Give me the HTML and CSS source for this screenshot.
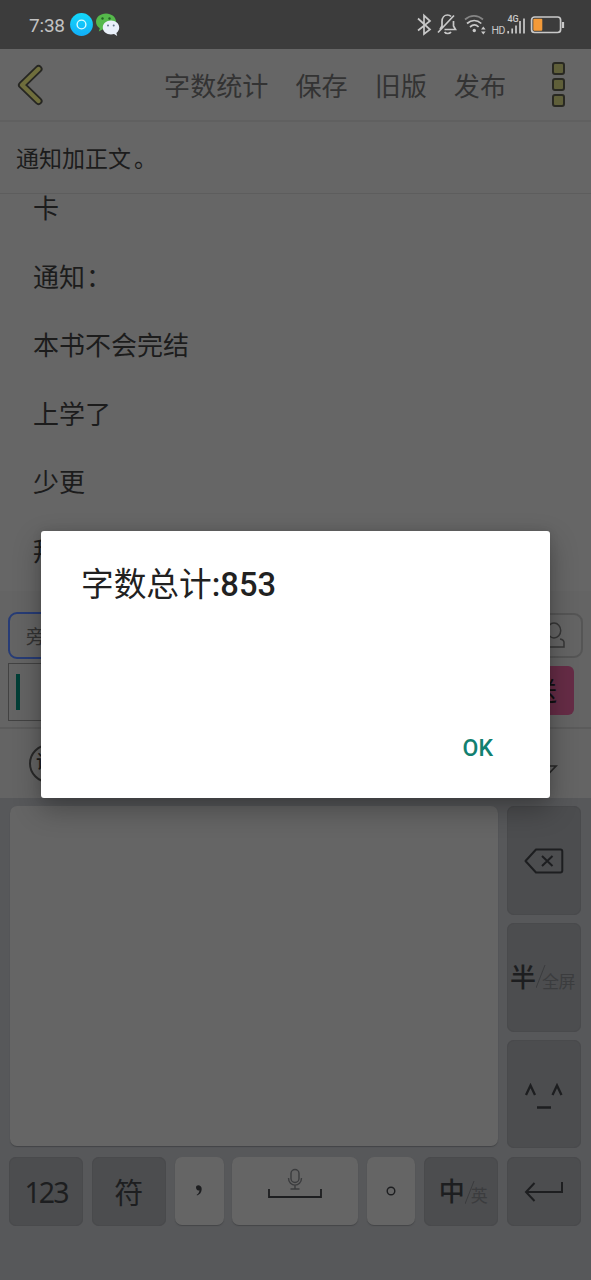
FILE: index.html
```html
<!DOCTYPE html>
<html lang="zh-CN">
<head>
<meta charset="utf-8">
<title>字数统计</title>
<link rel="stylesheet" href="styles.css">
</head>
<body>
<div class="screen">
  <header class="status">
    <span class="clock">7:38</span>
    <svg class="app-icons" width="52" height="26" viewBox="0 0 52 26">
      <defs><linearGradient id="sky" x1="0" y1="0" x2="0" y2="1"><stop offset="0" stop-color="#13d9fb"/><stop offset="1" stop-color="#12aef8"/></linearGradient></defs>
      <circle cx="11.500" cy="12.500" r="11.400" fill="url(#sky)"/>
      <circle cx="11.500" cy="12.500" r="4.400" fill="none" stroke="#d9fbff" stroke-width="1.400"/>
      <path d="M36 1.500c-5.600 0-10 3.600-10 8.200 0 2.700 1.500 5 3.800 6.500l-1 3.200 3.600-1.900c1.100.3 2.400.5 3.600.5 5.600 0 10-3.700 10-8.300s-4.400-8.200-10-8.200z" fill="#55b94b"/>
      <circle cx="32.500" cy="6.500" r="1.200" fill="#246325"/><circle cx="39.500" cy="6.500" r="1.200" fill="#246325"/>
      <path d="M41 8.500c-4.600 0-8.200 3.100-8.200 7s3.600 7 8.200 7c1.100 0 2.100-.2 3-.5l3.200 1.900-.8-2.900c1.700-1.300 2.800-3.200 2.800-5.500 0-3.900-3.600-7-8.200-7z" fill="#e9f0fa"/>
      <circle cx="38" cy="13.500" r="1" fill="#66768a"/><circle cx="43.700" cy="13.500" r="1" fill="#66768a"/>
    </svg>
    <svg class="system-icons" width="150" height="28" viewBox="0 0 150 28" fill="none" stroke="#c9c9c9" stroke-width="1.700">
      <path d="M3 7.500l12 11L9 23V4.500l6 5.500L3 19.500"/>
      <path d="M29.500 18.500h11l-2-3.500V10M25 18.500l2-3.500v-4.500c0-4 2.500-6.500 5.500-6.500 1.500 0 2.700.5 3.500 1.500M29.500 21c1.500 2 5 2 6.500 0M23 21.500L39 4.500"/>
      <path d="M50 8.500c5.500-4.800 12.500-4.800 18 0" stroke="#858585"/><path d="M52 12.500c4.500-4 10-4 14.300 0M55 16c3-2.700 6-2.700 8.600 0"/>
      <circle cx="59.300" cy="19.500" r="1.700" fill="#c9c9c9" stroke="none"/>
      <path d="M66 20.500l2.300 3 2.300-3zM66 18.500l2.300-3 2.300 3z" fill="#c9c9c9" stroke="none"/>
      <text x="76.500" y="22.500" class="hd-mark">HD</text><text x="92.500" y="10.500" class="net-mark">4G</text>
      <path d="M93.200 22.500v-2.500M97.200 22.500v-5M101 22.500v-8M105 22.500V10M109 22.500V7.500"/>
      <rect x="116.600" y="6" width="29" height="15.500" rx="3"/>
      <rect x="118.300" y="7.700" width="9" height="12" rx="1" fill="#f39a39" stroke="none"/>
      <path d="M148 11v6" stroke-width="2.200"/>
    </svg>
  </header>

  <nav class="topbar">
    <svg class="back" width="28" height="42" viewBox="0 0 28 42" fill="none" stroke-linecap="round" stroke-linejoin="round">
      <path d="M21.500 5L5 21l16.500 16" stroke="#262622" stroke-width="8"/>
      <path d="M21.500 5L5 21l16.500 16" stroke="#6f6e3c" stroke-width="4.400"/>
    </svg>
    <div class="actions"><span>字数统计</span><span>保存</span><span>旧版</span><span>发布</span></div>
    <div class="more"><i></i><i></i><i></i></div>
  </nav>

  <section class="chapter">通知加正文<span class="stop">。</span></section>

  <main class="editor">
    <p>卡</p><p>通知<span class="colon">：</span></p><p>本书不会完结</p><p>上学了</p><p>少更</p><p>拜</p>
  </main>

  <section class="composer">
    <div class="roles">
      <div class="role">旁白</div>
      <div class="contact">
        <svg width="28" height="30" viewBox="0 0 28 30" fill="none" stroke="#363636" stroke-width="1.500">
          <ellipse cx="14" cy="9.500" rx="6.700" ry="7.500"/><path d="M10 17.500c-5 1-6 3-6 8.500h20v-4.500c0-2-1-3-4-3.500"/>
        </svg>
      </div>
    </div>
    <div class="message"><div class="field"><i class="caret"></i></div><div class="send">发送</div></div>
  </section>

  <section class="ime-bar">
    <div class="ime-logo">讯</div>
    <svg width="28" height="16" viewBox="0 0 28 16" fill="none" stroke="#292929" stroke-width="1.700"><path d="M2 3h23L13.500 15z"/></svg>
  </section>

  <section class="keyboard">
    <div class="upper">
      <div class="writing"></div>
      <div class="side">
        <div class="key"><svg width="40" height="28" viewBox="0 0 40 28" fill="none" stroke="#1d1e20" stroke-width="2" stroke-linejoin="round"><path d="M1.500 14L12 2.500H36.500q1.800 0 1.800 2v19q0 2-2 2H12z"/><path d="M18 9l10.500 10M28.500 9L18 19"/></svg></div>
        <div class="key mode"><span class="half">半</span><svg width="10" height="26" viewBox="0 0 10 26"><path d="M0 24L9 1" stroke="#3b3c3e"/></svg><span class="full">全屏</span></div>
        <div class="key"><svg width="40" height="30" viewBox="0 0 40 30" fill="none" stroke="#1d1e20" stroke-width="2.300"><path d="M2 16L6.500 6.500l4.500 9.500M28.500 16L33 6.500l4.500 9.500M13 28.500h14"/></svg></div>
      </div>
    </div>
    <div class="lower">
      <div class="key digits">123</div>
      <div class="key symbol">符</div>
      <div class="key light"><svg width="10" height="14" viewBox="0 0 10 14"><path d="M2 3.200C2 .3 7.700.2 7.700 5c0 3.500-2 5.500-4.700 6.500l-.3-.7C4.500 9.700 5.500 8 5.400 6.200 3.500 7 2 5.300 2 3.200z" fill="#1d1e20"/></svg></div>
      <div class="key light space"><svg width="56" height="38" viewBox="0 0 56 38" fill="none" stroke="#1d1e20" stroke-width="1.800"><path d="M2 24v8h52v-8"/><g stroke="#3b3c3e" stroke-width="1.400"><rect x="24" y="4.500" width="8" height="13" rx="4"/><path d="M21.500 13c0 9.500 13 9.500 13 0M28 20V24M23.500 24h9"/></g></svg></div>
      <div class="key light"><svg width="10" height="12" viewBox="0 0 10 12"><circle cx="5" cy="6" r="3.800" fill="none" stroke="#1d1e20" stroke-width="1.400"/></svg></div>
      <div class="key lang"><span class="half">中</span><svg width="10" height="26" viewBox="0 0 10 26"><path d="M0 25L9 2" stroke="#3b3c3e"/></svg><span class="full">英</span></div>
      <div class="key"><svg width="40" height="24" viewBox="0 0 40 24" fill="none" stroke="#1d1e20" stroke-width="2"><path d="M10.500 3L2 12l8.500 9M2 12h36V2"/></svg></div>
    </div>
  </section>

  <div class="dialog" role="dialog">
    <h1>字数总计<b>:853</b></h1>
    <button type="button">OK</button>
  </div>
</div>
</body>
</html>
```
FILE: styles.css
```css
* { box-sizing: border-box; }
body { margin: 0; font-family: Roboto, "Noto Sans CJK SC", sans-serif; }
.screen { position: relative; width: 591px; height: 1280px; overflow: hidden; display: flex; flex-direction: column; background: #666; color: #1c1c1c; }
svg { display: block; flex: none; }
.screen > * { flex: none; }

.status { height: 49px; background: #3c3c3c; display: flex; align-items: center; padding-left: 29px; }
.clock { width: 41px; font-size: 19px; color: #c2c2c2; padding-top: 1px; letter-spacing: -.2px; }
.system-icons { margin-left: auto; margin-right: 26px; }
.system-icons text { fill: #c9c9c9; stroke: none; }
.system-icons .hd-mark { font-size: 10.500px; letter-spacing: -.5px; }
.system-icons .net-mark { font-size: 9px; font-weight: 500; }

.topbar { height: 73px; border-bottom: 2px solid #606060; display: flex; align-items: center; padding-left: 17px; padding-right: 26px; }
.actions { display: flex; gap: 27px; margin-left: auto; margin-right: 46px; font-size: 26.100px; line-height: 38px; color: #333; padding-top: 4px; }
.more { display: flex; flex-direction: column; gap: 3px; }
.more i { width: 13px; height: 13px; border: 2.500px solid #292922; border-radius: 3px; background: #5f5f39; }

.chapter { height: 72px; padding: 21px 16px 0; font-size: 23px; line-height: 34px; border-bottom: 1px solid #5d5d5d; }
.stop { padding-left: 3px; }
.colon { margin-left: 1px; }
.editor { height: 397px; overflow: hidden; padding: 1px 33px 0; font-size: 26px; }
.editor p { margin: 0; height: 68.500px; line-height: 28px; }

.composer { height: 138px; padding: 21px 8px 0; background: #646464; border-bottom: 2px solid #5b5b5b; }
.roles { display: flex; justify-content: space-between; height: 47px; }
.role { width: 84px; height: 47px; border: 2px solid #273c76; border-radius: 9px; padding-left: 16px; font-size: 19px; line-height: 47px; color: #333; }
.contact { width: 84px; height: 45px; border: 2px solid #555; border-radius: 9px; display: flex; align-items: center; justify-content: flex-end; padding-right: 13px; margin-top: 1px; }
.message { display: flex; justify-content: space-between; margin-top: 4px; padding-right: 9px; }
.field { width: 430px; height: 58px; border: 1px solid #424242; padding: 10px 7px; }
.caret { display: block; width: 4px; height: 36px; background: #003e36; }
.send { width: 84px; height: 49px; margin-top: 3px; border-radius: 6px; background: #662c46; color: #111; font-size: 26px; line-height: 52px; padding-left: 16px; letter-spacing: -1px; white-space: nowrap; }

.ime-bar { height: 69px; display: flex; align-items: center; justify-content: space-between; padding: 0 30px 0 29px; background: #646464; }
.ime-bar svg { margin-top: 14px; margin-right: 2px; }
.ime-logo { width: 39px; height: 39px; border: 2.500px solid #292929; border-radius: 50%; text-align: center; font-size: 19px; line-height: 34px; font-weight: 500; padding-right: 6px; white-space: nowrap; }

.keyboard { height: 482px; background: #57585a; padding: 8px 10px 0 9px; color: #1d1e20; }
.upper { display: flex; gap: 9px; padding-left: 1px; }
.writing { width: 488px; height: 340px; border-radius: 7px; background: #656565; box-shadow: 0 1px 1px #434446; }
.side { width: 74px; display: grid; grid-template-rows: 109px 109px 108px; gap: 8px; }
.key { display: flex; align-items: center; justify-content: center; border-radius: 7px; background: #4c4d4f; box-shadow: inset 0 0 0 1px #494a4c; white-space: nowrap; }
.key.light { background: #656565; box-shadow: 0 1px 1px #454648; }
.key.mode { padding-right: 3px; padding-bottom: 1px; }
.key.lang { padding-left: 4px; }
.lower { display: grid; grid-template-columns: 74px 74px 49px 126px 48px 74px 74px; gap: 0 8.800px; grid-template-rows: 69px; margin-top: 9px; }
.lower .light { margin-bottom: 1px; }
.digits { font-family: "Noto Sans", sans-serif; font-size: 28.500px; letter-spacing: -2px; }
.symbol { font-size: 29px; padding-bottom: 2px; }
.key.space { padding-bottom: 14px; }
.half { font-size: 26px; font-weight: 500; line-height: 38px; padding-top: 1px; }
.full { font-size: 17px; color: #3b3c3e; padding-top: 6px; letter-spacing: -.5px; margin-left: -4px; }

.dialog { position: absolute; left: 41px; top: 531px; width: 509px; height: 267px; background: #fff; border-radius: 3px; box-shadow: 0 11px 28px rgba(0,0,0,.3), 0 0 10px rgba(0,0,0,.1); display: flex; flex-direction: column; justify-content: space-between; padding: 30px 57px 32px 40px; }
.dialog h1 { margin: 0; font-size: 32.700px; font-weight: 400; line-height: 48px; color: #212121; }
.dialog b { font-weight: 500; }
.dialog button { align-self: flex-end; border: 0; padding: 0; background: none; font: 500 23px/34px Roboto, sans-serif; color: #128070; }
```
